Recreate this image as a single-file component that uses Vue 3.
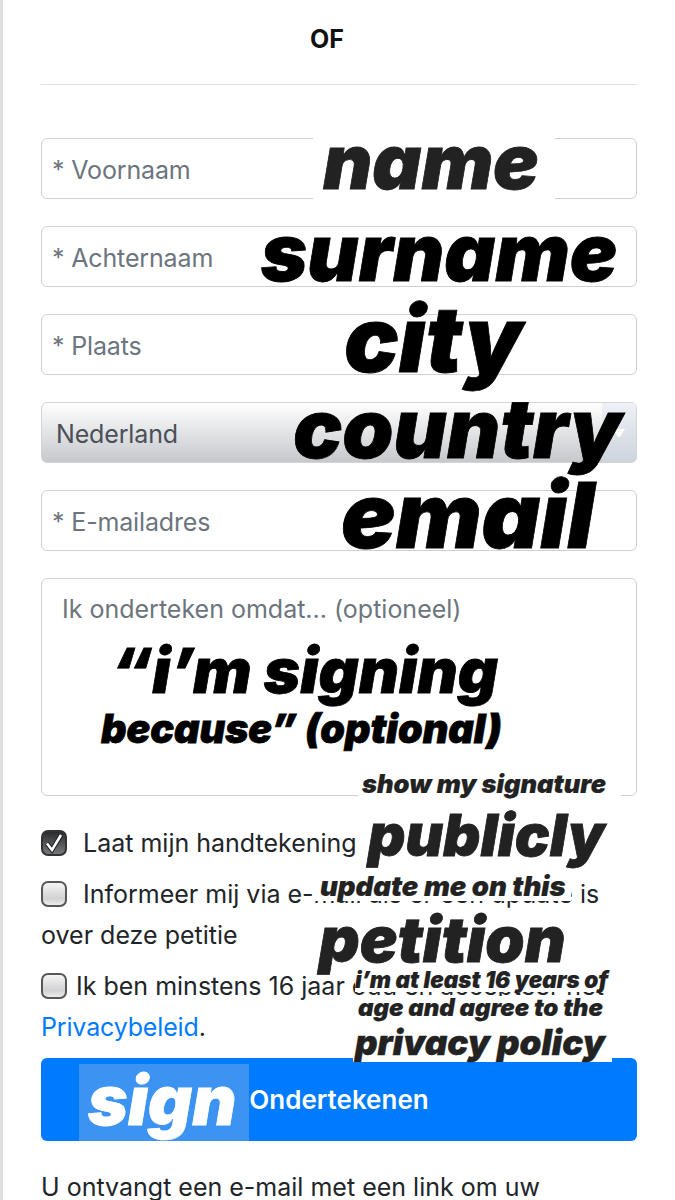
<script setup>
const fields = ['* Voornaam', '* Achternaam', '* Plaats']
const stickers = [
  { cls: 'name', text: 'name' },
  { cls: 'surname', text: 'surname' },
  { cls: 'city', text: 'city' },
  { cls: 'country', text: 'country' },
  { cls: 'email', text: 'email' },
  { cls: 'signing', text: '“i’m signing' },
  { cls: 'because', text: 'because” (optional)' },
  { cls: 'show', text: 'show my signature' },
  { cls: 'publicly', text: 'publicly' },
  { cls: 'update', text: 'update me on this' },
  { cls: 'petition', text: 'petition' },
  { cls: 'least', text: 'i’m at least 16 years of' },
  { cls: 'age', text: 'age and agree to the' },
  { cls: 'policy', text: 'privacy policy' },
  { cls: 'sign', text: 'sign' },
]
</script>

<template>
  <div class="page">
    <main class="content">
      <h2 class="title">OF</h2>
      <hr class="rule" />
      <form class="form" @submit.prevent>
        <div class="fields">
          <div v-for="f in fields" :key="f" class="input">{{ f }}</div>
          <div class="select">
            <span class="value">Nederland</span>
            <span class="arrow">
              <svg width="14" height="10" viewBox="0 0 14 10"><path d="M1 1h12L8 9H6z" fill="#fff" /></svg>
            </span>
          </div>
          <div class="input">* E-mailadres</div>
          <div class="textarea">Ik onderteken omdat... (optioneel)</div>
        </div>

        <div class="checks">
          <p class="check">
            <span class="box on">
              <svg width="26" height="26" viewBox="0 0 26 26"><path d="M6 13.5l5 6.5L20 5" fill="none" stroke="#1d1e20" stroke-width="4.6" /><path d="M6 13.5l5 6.5L20 5" fill="none" stroke="#fff" stroke-width="2.6" /></svg>
            </span>
            <span class="gap"></span>Laat mijn handtekening openbaar zien
          </p>
          <p class="check">
            <span class="box"></span>
            <span class="gap"></span>Informeer mij via e-mail als er een update is over deze petitie
          </p>
          <p class="check">
            <span class="box"></span>
            <span class="gap small"></span>Ik ben minstens 16 jaar oud en accepteer het <a class="link">Privacybeleid</a>.
          </p>
        </div>

        <button class="submit">Ondertekenen</button>
      </form>
      <p class="note">U ontvangt een e-mail met een link om uw handtekening te bevestigen.</p>
    </main>
    <span v-for="s in stickers" :key="s.cls" class="sticker" :class="s.cls">{{ s.text }}</span>
  </div>
</template>

<style>
html, body { margin: 0; background: #fff; }
</style>

<style scoped>
.page {
  position: relative;
  height: 1200px;
  overflow: hidden;
  box-sizing: border-box;
  border-left: 3px solid #dfdfe1;
  background: #fff;
  font-family: Inter, "Liberation Sans", sans-serif;
  color: #212529;
}
.content {
  margin-left: 38px;
  padding-right: 38px;
}
.title {
  margin: 0;
  padding: 23px 24px 0 0;
  height: 84px;
  box-sizing: border-box;
  font-size: 25px;
  line-height: 32px;
  font-weight: 700;
  text-align: center;
  color: #111;
}
.rule {
  margin: 0 0 53px;
  border: 0;
  border-top: 1px solid #dee0e3;
}
.fields { display: flex; flex-direction: column; gap: 27px; }
.input, .select, .textarea {
  box-sizing: border-box;
  height: 61px;
  border: 1.5px solid #cdd1d6;
  border-radius: 6px;
  font-size: 25px;
  letter-spacing: -0.15px;
  color: #6c757d;
  display: flex;
  align-items: center;
  padding: 2px 0 0 10px;
}
.select {
  justify-content: space-between;
  padding: 0 0 0 14px;
  color: #495057;
  border-color: #d3d5d8;
  background: linear-gradient(#fff, #c6c8cc);
  overflow: hidden;
}
.value { padding-top: 2px; }
.arrow {
  align-self: stretch;
  width: 34px;
  display: flex;
  align-items: center;
  justify-content: center;
  background: linear-gradient(#eef1f5, #cdd4dd);
}
.textarea {
  height: 218px;
  align-items: flex-start;
  padding: 15px 20px;
  line-height: 30px;
  letter-spacing: 0;
}
.checks { margin-top: 27px; display: flex; flex-direction: column; gap: 10px; }
.check {
  margin: 0;
  font-size: 25px;
  line-height: 41px;
  color: #212529;
}
.box {
  display: inline-block;
  box-sizing: border-box;
  width: 26px;
  height: 26px;
  vertical-align: -4px;
  border: 2px solid #55575a;
  border-radius: 7px;
  background: linear-gradient(#f4f4f4, #d2d2d4 70%, #ececec);
}
.box.on {
  background: linear-gradient(#2b2c2e, #77797c);
  border-color: #333;
  position: relative;
}
.box.on svg { position: absolute; left: -2px; top: -2px; }
.gap { display: inline-block; width: 16px; }
.gap.small { width: 9px; }
.link { color: #007bff; letter-spacing: -0.15px; }
.submit {
  margin-top: 10px;
  width: 100%;
  height: 83px;
  border: 0;
  border-radius: 6px;
  background: #007bff;
  color: #fff;
  font-family: inherit;
  font-size: 26px;
  font-weight: 600;
}
.note {
  margin: 27px 0 0;
  font-size: 25px;
  line-height: 38px;
}

.sticker {
  position: absolute;
  white-space: nowrap;
  font-style: italic;
  font-weight: 900;
  line-height: 1;
  color: #000;
  -webkit-text-stroke: 0.8px currentColor;
}
.name { left: 310px; top: 138px; padding: 0 16px 0 10px; height: 61px; font-size: 76px; color: #222; background: #fff; line-height: 46px; }
.surname { left: 258px; top: 213px; font-size: 79px; }
.city { left: 341px; top: 294px; font-size: 91px; }
.country { left: 290px; top: 388px; font-size: 82px; }
.email { left: 338px; top: 470px; font-size: 91px; }
.signing { left: 108px; top: 640px; font-size: 62px; }
.because { left: 98px; top: 710px; font-size: 39.5px; }
.show { left: 355px; top: 771px; padding: 0 15px 0 4px; font-size: 25.5px; color: #222; background: #fff; -webkit-text-stroke-width: 0.2px; }
.publicly { left: 361px; top: 806px; padding: 0 10px 4px 4px; font-size: 58px; color: #222; background: #fff; }
.update { left: 312px; top: 873px; padding: 0 5px; font-size: 27.5px; color: #222; background: #fff; -webkit-text-stroke-width: 0.2px; }
.petition { left: 316px; top: 908px; font-size: 63px; color: #222; }
.least { left: 352px; top: 969px; font-size: 22.5px; color: #222; background: #fff; -webkit-text-stroke-width: 0.2px; }
.age { left: 355px; top: 996px; font-size: 24px; color: #222; background: #fff; -webkit-text-stroke-width: 0.2px; }
.policy { left: 350px; top: 1025px; padding: 0 7px 2px 2px; font-size: 35px; color: #222; background: #fff; -webkit-text-stroke-width: 0.4px; }
.sign { left: 76px; top: 1064px; width: 170px; height: 77px; padding-left: 9px; box-sizing: border-box; font-size: 68px; color: #fff; background: #3c93f1; overflow: hidden; line-height: 72px; }
</style>
